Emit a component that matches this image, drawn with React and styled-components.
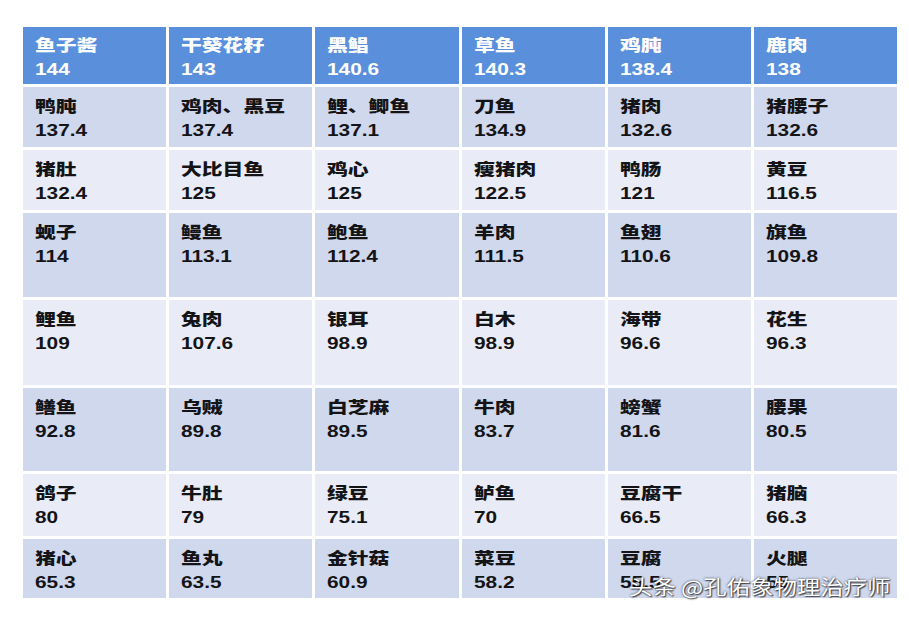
import React from "react";
import styled, { createGlobalStyle } from "styled-components";

const Global = createGlobalStyle`
  html, body { margin: 0; padding: 0; background: #ffffff; }
  body { width: 909px; height: 617px; overflow: hidden; }
`;

const Page = styled.div`
  position: relative;
  width: 909px;
  height: 617px;
  box-sizing: border-box;
  padding: 27px 12px 0 23px;
  background: #ffffff;
`;

const Table = styled.div`
  display: grid;
  width: 874px;
  grid-template-columns: repeat(6, 1fr);
  grid-template-rows: 57px 60px 60px 84px 85px 83px 62px 59px;
  column-gap: 3px;
  row-gap: 3px;
`;

const Cell = styled.div`
  box-sizing: border-box;
  padding: ${(p) => (p.$kind === "head" ? "7px" : "8px")} 0 0 12px;
  overflow: hidden;
  background: ${(p) =>
    p.$kind === "head" ? "#5a8fdb" : p.$kind === "dark" ? "#d0d8ee" : "#e9ecf6"};
  color: ${(p) => (p.$kind === "head" ? "#ffffff" : "#141416")};
`;

const TextBlock = styled.div`
  transform: scaleX(1.3);
  transform-origin: left top;
  white-space: nowrap;
  font-weight: 700;
  font-size: 16px;
  line-height: 24px;
`;

const Name = styled.div`
  font-family: "Liberation Sans", "Noto Sans CJK SC", sans-serif;
  font-weight: 900;
`;

const Value = styled.div`
  font-family: "Liberation Sans", Arial, sans-serif;
  line-height: 23px;
`;

const Watermark = styled.div`
  position: absolute;
  right: 19px;
  top: 574px;
  font-family: "Noto Sans CJK SC", sans-serif;
  font-size: 20px;
  line-height: 26px;
  color: #ffffff;
  transform: scaleX(1.17);
  transform-origin: right top;
  white-space: nowrap;
  text-shadow: 0 0 2px rgba(0, 0, 0, 0.85), 1px 1px 1px rgba(0, 0, 0, 0.6);
`;

const rows = [
  [["鱼子酱", "144"], ["干葵花籽", "143"], ["黑鲳", "140.6"], ["草鱼", "140.3"], ["鸡肫", "138.4"], ["鹿肉", "138"]],
  [["鸭肫", "137.4"], ["鸡肉、黑豆", "137.4"], ["鲤、鲫鱼", "137.1"], ["刀鱼", "134.9"], ["猪肉", "132.6"], ["猪腰子", "132.6"]],
  [["猪肚", "132.4"], ["大比目鱼", "125"], ["鸡心", "125"], ["瘦猪肉", "122.5"], ["鸭肠", "121"], ["黄豆", "116.5"]],
  [["蚬子", "114"], ["鳗鱼", "113.1"], ["鲍鱼", "112.4"], ["羊肉", "111.5"], ["鱼翅", "110.6"], ["旗鱼", "109.8"]],
  [["鲤鱼", "109"], ["兔肉", "107.6"], ["银耳", "98.9"], ["白木", "98.9"], ["海带", "96.6"], ["花生", "96.3"]],
  [["鳝鱼", "92.8"], ["乌贼", "89.8"], ["白芝麻", "89.5"], ["牛肉", "83.7"], ["螃蟹", "81.6"], ["腰果", "80.5"]],
  [["鸽子", "80"], ["牛肚", "79"], ["绿豆", "75.1"], ["鲈鱼", "70"], ["豆腐干", "66.5"], ["猪脑", "66.3"]],
  [["猪心", "65.3"], ["鱼丸", "63.5"], ["金针菇", "60.9"], ["菜豆", "58.2"], ["豆腐", "55.5"], ["火腿", "55"]],
];

export default function App() {
  return (
    <>
      <Global />
      <Page>
        <Table>
          {rows.map((row, ri) =>
            row.map(([name, val], ci) => (
              <Cell
                key={`${ri}-${ci}`}
                $kind={ri === 0 ? "head" : ri % 2 === 1 ? "dark" : "light"}
              >
                <TextBlock>
                  <Name>{name}</Name>
                  <Value>{val}</Value>
                </TextBlock>
              </Cell>
            ))
          )}
        </Table>
        <Watermark>头条 @孔佑象物理治疗师</Watermark>
      </Page>
    </>
  );
}
